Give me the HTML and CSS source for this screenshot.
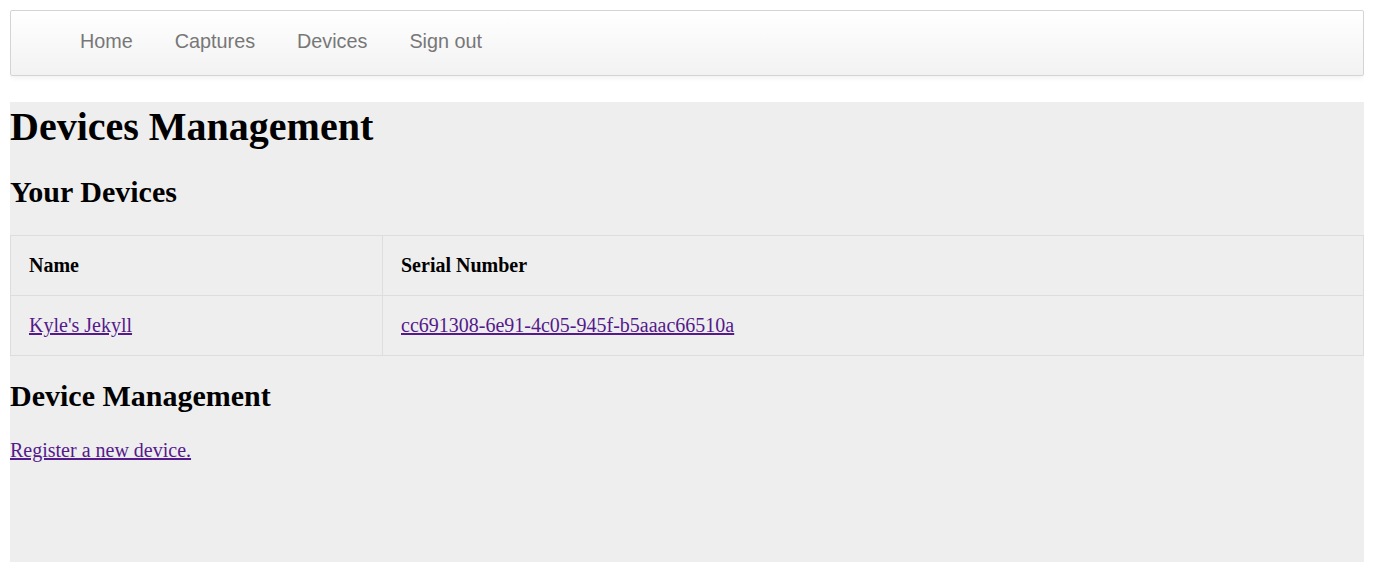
FILE: index.html
```html
<!DOCTYPE html>
<html>
<head>
<meta charset="utf-8">
<title>Devices Management</title>
<link rel="stylesheet" href="styles.css">
</head>
<body>
<div class="navbar">
  <ul class="nav">
    <li><a href="#">Home</a></li>
    <li><a href="#">Captures</a></li>
    <li><a href="#">Devices</a></li>
    <li><a href="#">Sign out</a></li>
  </ul>
</div>
<div class="content">
  <h1 class="title">Devices Management</h1>
  <h2 class="section first">Your Devices</h2>
  <table class="devices">
    <thead>
      <tr><th class="col-name">Name</th><th>Serial Number</th></tr>
    </thead>
    <tbody>
      <tr><td><a class="link" href="#">Kyle's Jekyll</a></td><td><a class="link" href="#">cc691308-6e91-4c05-945f-b5aaac66510a</a></td></tr>
    </tbody>
  </table>
  <h2 class="section second">Device Management</h2>
  <p class="register"><a class="link" href="#">Register a new device.</a></p>
</div>
</body>
</html>
```
FILE: styles.css
```css
html, body {
  background: #fff;
}
body {
  margin: 10px;
  font-family: "Liberation Serif", "Times New Roman", serif;
  font-size: 20px;
  color: #000;
}
.navbar {
  height: 64px;
  border: 1px solid #d4d4d4;
  border-radius: 2px;
  background: linear-gradient(to bottom, #ffffff, #f2f2f2);
  box-shadow: 0 1px 6px rgba(0, 0, 0, 0.08);
  display: flex;
  align-items: center;
  box-sizing: content-box;
}
.nav {
  list-style: none;
  margin: 0;
  padding: 0 0 4px 48px;
  display: flex;
}
.nav a {
  display: block;
  padding: 0 21px;
  font-family: "Liberation Sans", Arial, sans-serif;
  font-size: 19.8px;
  color: #777;
  text-decoration: none;
}
.content {
  margin-top: 26px;
  background: #eeeeee;
  padding: 1px 0 100px;
}
.title {
  margin: 0;
  font-size: 40px;
  font-weight: bold;
  line-height: normal;
}
.section {
  font-size: 30px;
  font-weight: bold;
  line-height: normal;
  margin: 0;
}
.section.first {
  margin-top: 25px;
}
.section.second {
  margin-top: 23px;
}
.devices {
  width: 100%;
  border-collapse: collapse;
  margin-top: 26px;
}
.devices th,
.devices td {
  border: 1px solid #dddddd;
  height: 59px;
  padding: 0 18px;
  text-align: left;
  vertical-align: middle;
  font-size: 20px;
}
.devices th {
  font-weight: bold;
}
.col-name {
  width: 335px;
}
.link {
  color: #551a8b;
  text-decoration: underline;
}
.register {
  margin: 26px 0 0;
  font-size: 20px;
}
```
